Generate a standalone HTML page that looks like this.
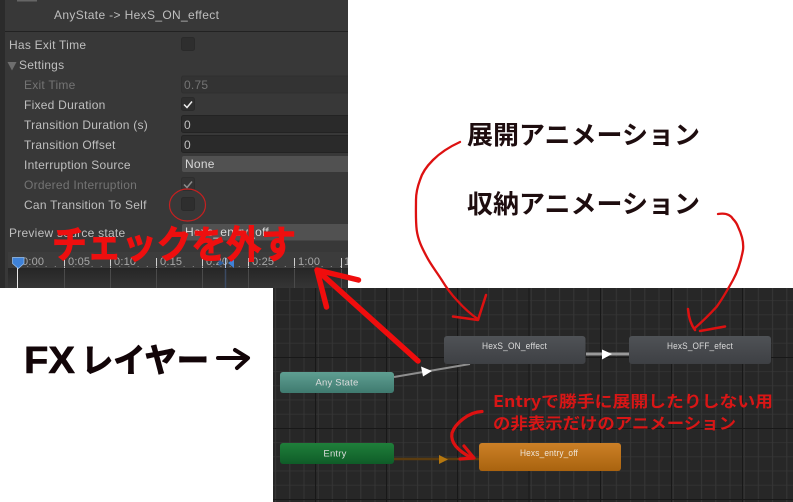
<!DOCTYPE html>
<html><head><meta charset="utf-8"><style>
html,body{margin:0;padding:0;background:#fff}
#p{position:relative;width:793px;height:502px;overflow:hidden;background:#fff}
svg{position:absolute;left:0;top:0;filter:blur(.35px)}
text{font-family:"Liberation Sans","Noto Sans CJK JP",sans-serif}
.l{font-size:12px;fill:#bfbfbf;letter-spacing:.25px}
.d{font-size:12px;fill:#747474;letter-spacing:.25px}
.t{font-size:11px;fill:#a8a8a8;letter-spacing:.2px}
.n{font-size:9.500px;fill:#dcdcdc;text-anchor:middle;letter-spacing:.2px}
.h{font-family:"Noto Sans CJK JP",sans-serif;font-weight:700}
</style></head><body><div id="p">
<svg width="793" height="502" viewBox="0 0 793 502">
<defs>
<linearGradient id="g1" x1="0" y1="0" x2="0" y2="1"><stop offset="0" stop-color="#4f5256"/><stop offset="1" stop-color="#3e4044"/></linearGradient>
<linearGradient id="g2" x1="0" y1="0" x2="0" y2="1"><stop offset="0" stop-color="#5f9f92"/><stop offset="1" stop-color="#3f7a6f"/></linearGradient>
<linearGradient id="g3" x1="0" y1="0" x2="0" y2="1"><stop offset="0" stop-color="#1f7f3a"/><stop offset="1" stop-color="#0f5c28"/></linearGradient>
<linearGradient id="g4" x1="0" y1="0" x2="0" y2="1"><stop offset="0" stop-color="#cc8026"/><stop offset="1" stop-color="#a9630f"/></linearGradient>
<linearGradient id="g5" x1="0" y1="0" x2="0" y2="1"><stop offset="0" stop-color="#262626"/><stop offset="1" stop-color="#353535"/></linearGradient>
<pattern id="minor" x="273" y="286" width="14.2" height="14.2" patternUnits="userSpaceOnUse"><path d="M2.6 0V14.2M0 .2H14.2" stroke="#363636" stroke-width="1" fill="none"/></pattern>
</defs>

<!-- inspector -->
<rect width="348" height="288" fill="#383838"/>
<rect width="5" height="288" fill="#2b2b2b"/>
<rect x="17" width="20" height="1.500" fill="#666"/>
<rect x="5" y="31" width="343" height="1" fill="#222"/>
<text x="54" y="19" class="l" style="letter-spacing:.35px">AnyState -&gt; HexS_ON_effect</text>
<text x="9" y="49" class="l">Has Exit Time</text>
<path d="M7.500 62h9l-4.500 8.500z" fill="#6e6e6e"/>
<text x="19" y="69" class="l">Settings</text>
<text x="24" y="89" class="d">Exit Time</text>
<text x="24" y="109" class="l">Fixed Duration</text>
<text x="24" y="129" class="l">Transition Duration (s)</text>
<text x="24" y="149" class="l">Transition Offset</text>
<text x="24" y="169" class="l">Interruption Source</text>
<text x="24" y="189" class="d">Ordered Interruption</text>
<text x="24" y="209" class="l">Can Transition To Self</text>
<text x="9" y="237" class="l">Preview source state</text>

<rect x="181.500" y="37.500" width="13" height="13" rx="2" fill="#2e2e2e" stroke="#2a2a2a"/>
<rect x="181.500" y="76" width="170" height="17" rx="2" fill="#333" stroke="#2f2f2f"/>
<text x="184" y="89" class="d">0.75</text>
<rect x="181.500" y="97.500" width="13" height="13" rx="2" fill="#2e2e2e" stroke="#2a2a2a"/>
<path d="M184 104.500l3 3 5-6" stroke="#eee" stroke-width="1.500" fill="none"/>
<rect x="181.500" y="115.500" width="170" height="17" rx="2" fill="#2a2a2a" stroke="#232323"/>
<text x="184" y="129" class="l">0</text>
<rect x="181.500" y="135.500" width="170" height="17" rx="2" fill="#2a2a2a" stroke="#232323"/>
<text x="184" y="149" class="l">0</text>
<rect x="182" y="156" width="170" height="16" rx="2" fill="#515151"/>
<text x="185" y="168" class="l" style="fill:#d8d8d8">None</text>
<rect x="181.500" y="177.500" width="13" height="13" rx="2" fill="#333" stroke="#2e2e2e"/>
<path d="M184 184.500l3 3 5-6" stroke="#8c8c8c" stroke-width="1.500" fill="none"/>
<rect x="181.500" y="197.500" width="13" height="13" rx="2" fill="#2e2e2e" stroke="#2a2a2a"/>
<rect x="182" y="224" width="170" height="16.500" rx="2" fill="#515151"/>
<text x="185" y="236" class="l" style="fill:#d8d8d8">Hexs_entry_off</text>

<!-- timeline -->
<rect x="8" y="252" width="340" height="16" fill="#3c3c3c"/>
<rect x="8" y="268" width="340" height="20" fill="url(#g5)"/>
<rect x="8" y="268" width="340" height="1" fill="#262626"/>
<g fill="#d0d0d0">
<rect x="64" y="258" width="1" height="10"/><rect x="110" y="258" width="1" height="10"/><rect x="156" y="258" width="1" height="10"/><rect x="202" y="258" width="1" height="10"/><rect x="248" y="258" width="1" height="10"/><rect x="294" y="258" width="1" height="10"/><rect x="341" y="258" width="1" height="10"/>
</g>
<g stroke="#8a8a8a" stroke-dasharray="1 8.200" fill="none"><path d="M18 266.500H348"/></g>
<g stroke="#4a4a4a"><path d="M64.500 269V288M110.500 269V288M156.500 269V288M202.500 269V288M248.500 269V288M294.500 269V288M341.500 269V288"/></g>
<path d="M225.500 269V288" stroke="#3b4a63" stroke-width="1.500"/>
<path d="M17.500 262V288" stroke="#e8e8e8"/>
<text x="22" y="265" class="t">0:00</text><text x="68" y="265" class="t">0:05</text><text x="114" y="265" class="t">0:10</text><text x="160" y="265" class="t">0:15</text><text x="206" y="265" class="t">0:20</text><text x="252" y="265" class="t">0:25</text><text x="298" y="265" class="t">1:00</text><text x="344" y="265" class="t">1:05</text>
<path d="M12.500 257.500h11.500v6l-5.700 5-5.800-5z" fill="#3f82d8" stroke="#9cc3f0" stroke-width=".7"/>
<path d="M234 258v10l-6-5z" fill="#3f82d8"/>
<path d="M224 263l-4-2.500h-1.500v5H220z" fill="#2e5f9f"/>
<path d="M225.500 258V268" stroke="#a9c6ee"/>

<!-- white overlays -->
<rect x="348" width="445" height="288" fill="#fff"/>
<rect y="288" width="273" height="214" fill="#fff"/>

<!-- graph -->
<rect x="273" y="288" width="520" height="214" fill="#272727"/>
<rect x="273" y="288" width="520" height="214" fill="url(#minor)"/>
<path d="M315.500 288V502M386.500 288V502M457.500 288V502M529 288V502M600.500 288V502M671.500 288V502M742.500 288V502M273 357.500H793M273 428.500H793M273 499.500H793" stroke="#181818" fill="none"/>

<path d="M394 377L470 364" stroke="#8f8f8f" stroke-width="2"/>
<path d="M421 366.500l11 4.500-9 5.500z" fill="#fff"/>
<path d="M586 354H629" stroke="#9a9a9a" stroke-width="3"/>
<path d="M602 349.500l10 4.500-10 5.500z" fill="#fff"/>
<path d="M394 459H479" stroke="#5a3c10" stroke-width="2.500"/>
<path d="M439 455l9 4.500-9 4.500z" fill="#b5770f"/>

<rect x="444" y="336" width="141.500" height="28" rx="3" fill="url(#g1)"/>
<text x="514.500" y="349" class="n" textLength="65" lengthAdjust="spacingAndGlyphs">HexS_ON_effect</text>
<rect x="629" y="336" width="142" height="28" rx="3" fill="url(#g1)"/>
<text x="700" y="349" class="n" textLength="66" lengthAdjust="spacingAndGlyphs">HexS_OFF_efect</text>
<rect x="280" y="372" width="114" height="21" rx="3" fill="url(#g2)"/>
<text x="337" y="385.500" class="n">Any State</text>
<rect x="280" y="443" width="114" height="21" rx="3" fill="url(#g3)"/>
<text x="335" y="456.500" class="n">Entry</text>
<rect x="479" y="443" width="142" height="28" rx="3" fill="url(#g4)"/>
<text x="549" y="456" class="n" style="fill:#f0e6d8" textLength="58" lengthAdjust="spacingAndGlyphs">Hexs_entry_off</text>

<!-- red annotations -->
<ellipse cx="187.500" cy="205" rx="18" ry="16" fill="none" stroke="#c62020" stroke-width="1.200"/>
<g fill="none" stroke="#dd1111" stroke-linecap="round" stroke-linejoin="round">
<path d="M460 142C449 147 440 153 433 160C426 167 422 173 420 180C417 188 416 194 416 200C416 210 415.500 220 416.700 230C418 240 422 248 426.700 256.700C431 265 436 271 441.700 280C446 287 451 294 456.700 300C463 307 470 314 478.300 319.300" stroke-width="2.300"/>
<path d="M486 295L478 320L453 316.500" stroke-width="2.500"/>
<path d="M718 214C724 213 730 214 733 219C736 222 737 224 738 226.700C742 235 744 242 743 250C741 261 738 271 733 280C728 289 723 298 716.700 306.700C710 314 703 321 695 328" stroke-width="2.300"/>
<path d="M688 309Q689 322 695 330M700 331L725 326.500" stroke-width="2.500"/>
<path d="M482 411.500C468 412 455 424 452 433C450 444 460 452 472 458" stroke-width="3.200"/>
<path d="M464 446L474 458L460 459" stroke-width="3.200"/>
</g>
<g fill="none" stroke="#f00d0d" stroke-width="5.500" stroke-linecap="round" stroke-linejoin="round">
<path d="M418 361L318 271"/>
<path d="M358.500 280L317 270L326.500 307"/>
</g>

<text x="493" y="407" class="h" font-size="16" fill="#d81616" textLength="280" lengthAdjust="spacingAndGlyphs">Entryで勝手に展開したりしない用</text>
<text x="493" y="429" class="h" font-size="16" fill="#d81616" textLength="243" lengthAdjust="spacingAndGlyphs">の非表示だけのアニメーション</text>

<text x="52" y="258" class="h" font-size="38" fill="#ee0f0f" stroke="#ee0f0f" stroke-width="1" textLength="244" lengthAdjust="spacingAndGlyphs">チェックを外す</text>

<text x="467" y="144" class="h" font-size="25.500" fill="#1e0d0f" textLength="233" lengthAdjust="spacingAndGlyphs">展開アニメーション</text>
<text x="467" y="213" class="h" font-size="25.500" fill="#1e0d0f" textLength="233" lengthAdjust="spacingAndGlyphs">収納アニメーション</text>
<text x="24" y="373" font-size="38" font-weight="700" fill="#120508" stroke="#120508" stroke-width=".6" stroke-linejoin="round" textLength="51" lengthAdjust="spacingAndGlyphs" style="font-family:'Liberation Sans',sans-serif">FX</text>
<text x="81" y="372" class="h" font-size="33" fill="#120508" stroke="#120508" stroke-width="1" stroke-linejoin="round" textLength="128" lengthAdjust="spacingAndGlyphs">レイヤー</text>
<path d="M218 358H247M235 350L248 358L237 368" fill="none" stroke="#120508" stroke-width="4" stroke-linecap="round" stroke-linejoin="round"/>
</svg>
</div></body></html>
